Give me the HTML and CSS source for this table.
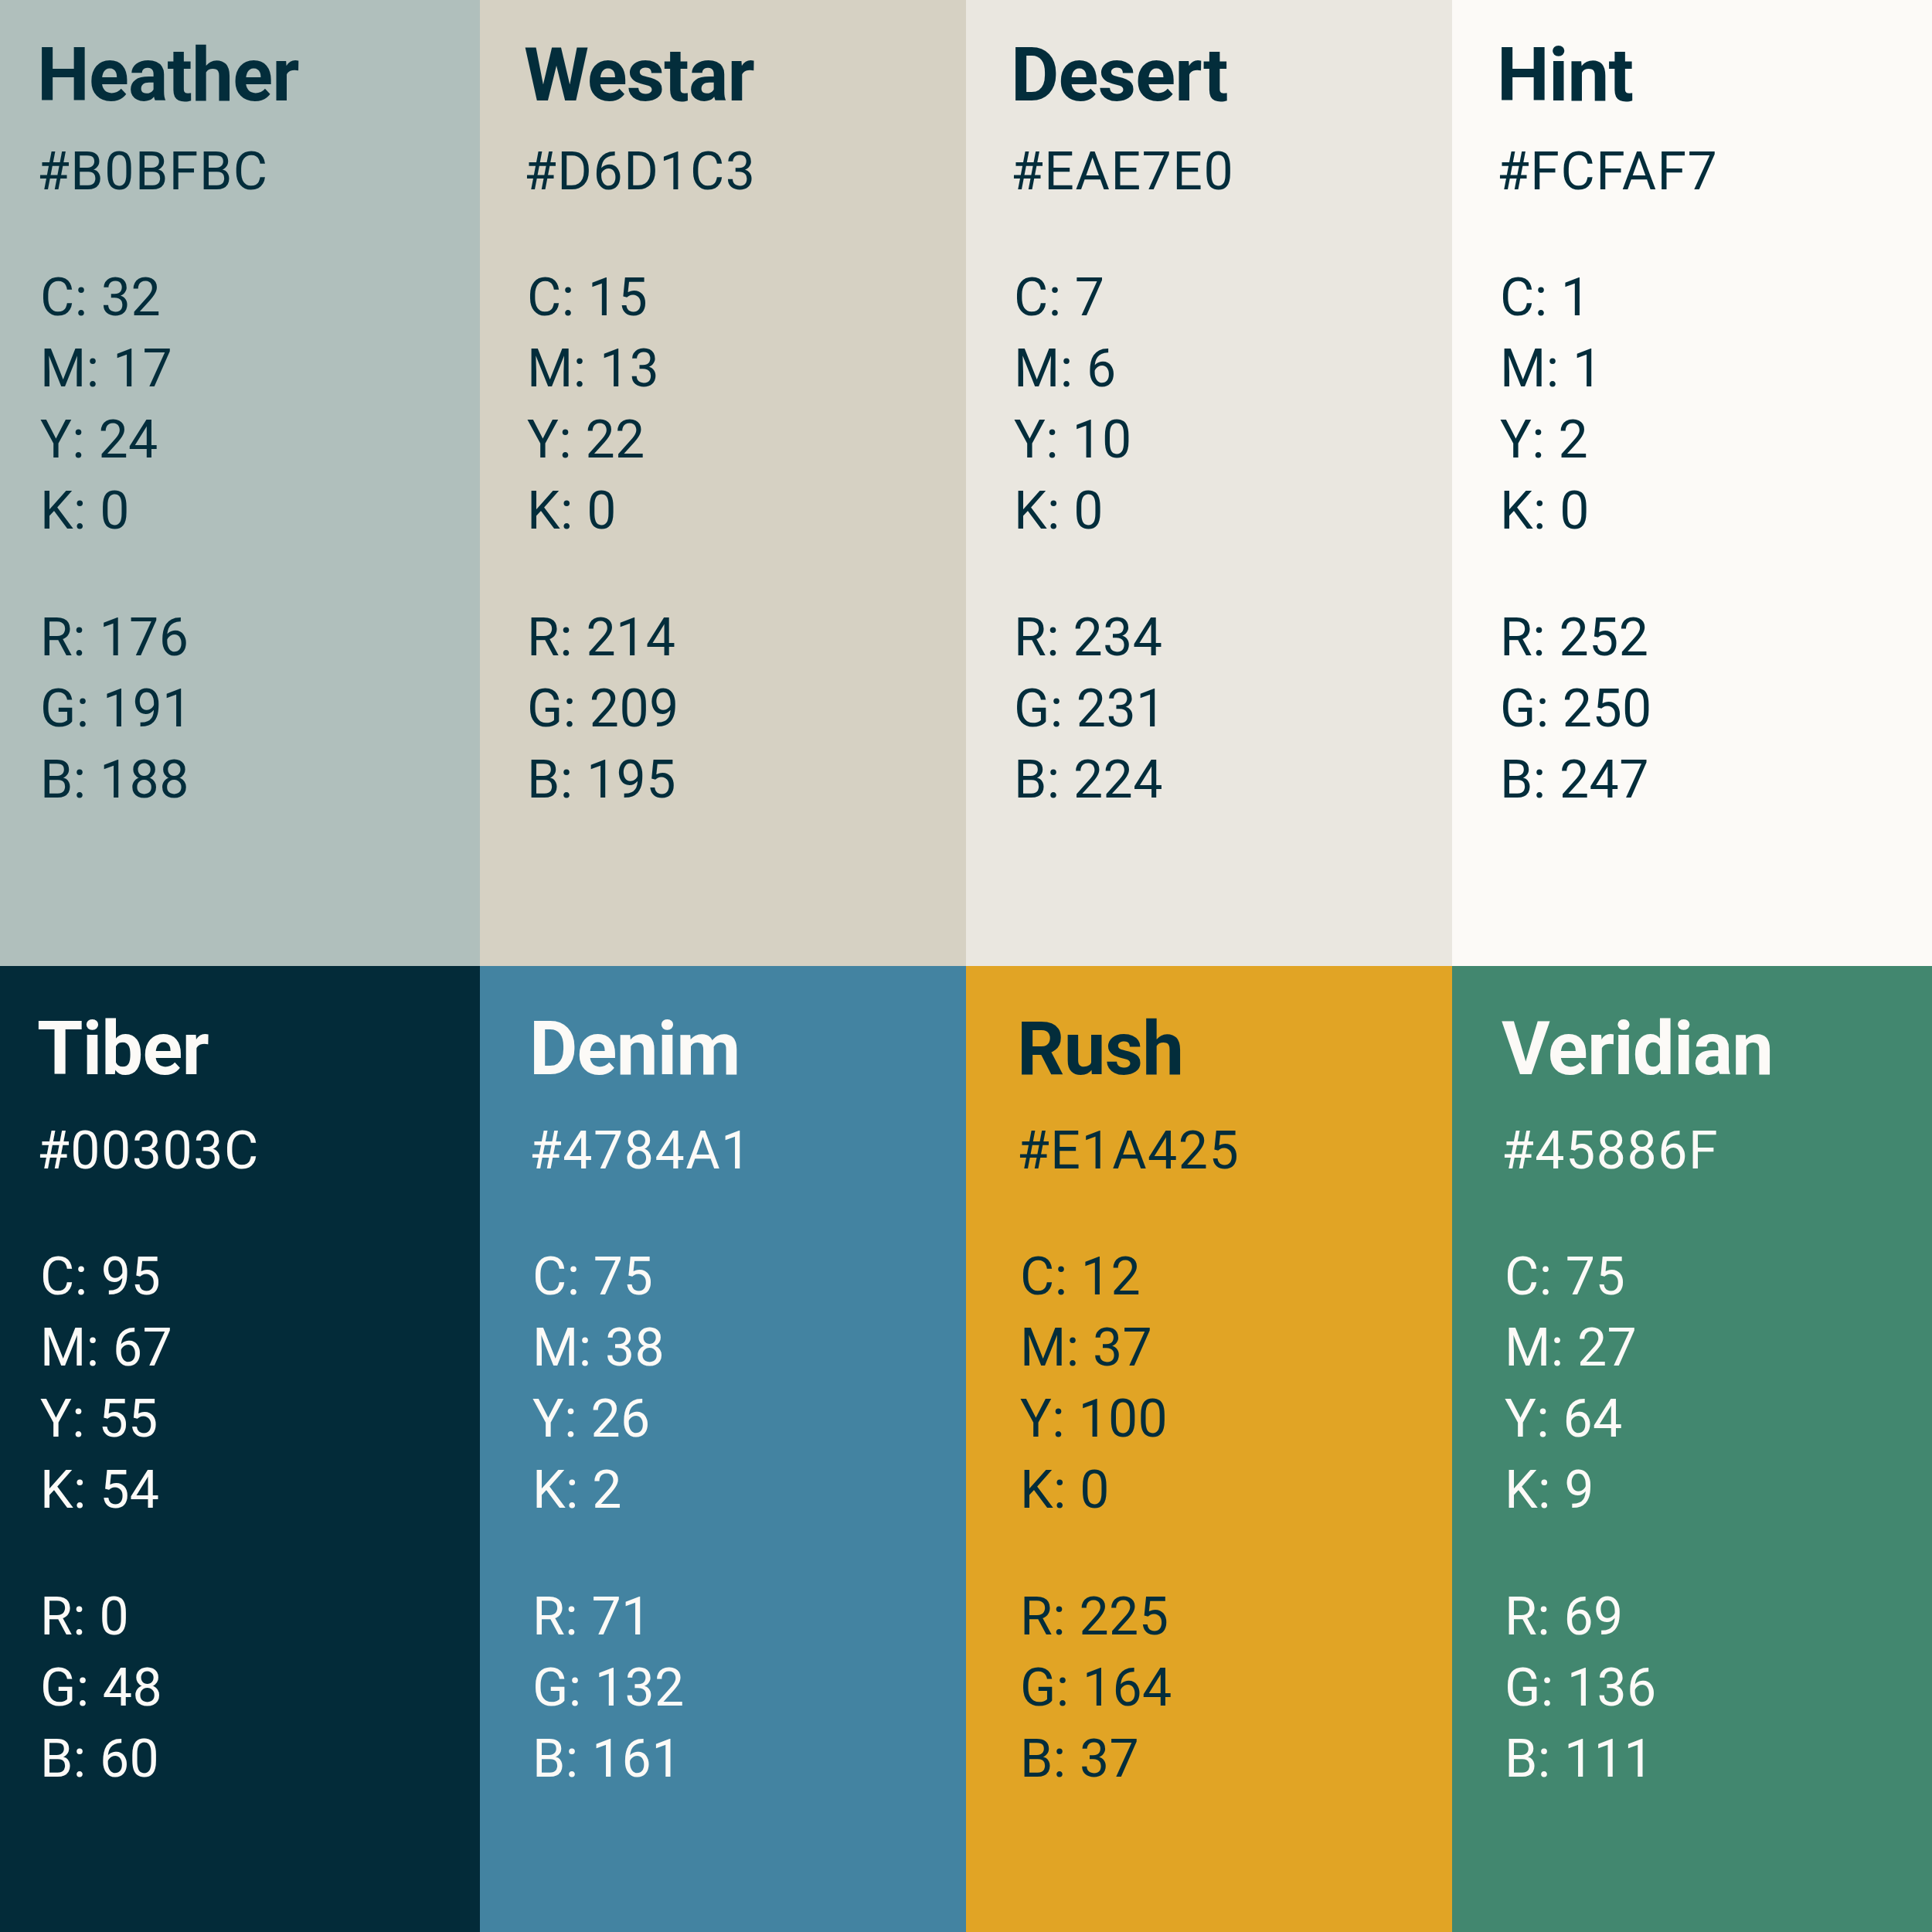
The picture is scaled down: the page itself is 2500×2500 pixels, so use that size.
FILE: index.html
```html
<!DOCTYPE html>
<html lang="en">
<head>
<meta charset="utf-8">
<title>Colour palette</title>
<link rel="stylesheet" href="styles.css">
</head>
<body>
<main class="palette">
  <section class="swatch top c1 heather">
    <h2 class="name">Heather</h2>
    <p class="hex">#B0BFBC</p>
    <ul class="values"><li>C: 32</li><li>M: 17</li><li>Y: 24</li><li>K: 0</li></ul>
    <ul class="values"><li>R: 176</li><li>G: 191</li><li>B: 188</li></ul>
  </section>
  <section class="swatch top c2 westar">
    <h2 class="name">Westar</h2>
    <p class="hex">#D6D1C3</p>
    <ul class="values"><li>C: 15</li><li>M: 13</li><li>Y: 22</li><li>K: 0</li></ul>
    <ul class="values"><li>R: 214</li><li>G: 209</li><li>B: 195</li></ul>
  </section>
  <section class="swatch top c3 desert">
    <h2 class="name">Desert</h2>
    <p class="hex">#EAE7E0</p>
    <ul class="values"><li>C: 7</li><li>M: 6</li><li>Y: 10</li><li>K: 0</li></ul>
    <ul class="values"><li>R: 234</li><li>G: 231</li><li>B: 224</li></ul>
  </section>
  <section class="swatch top c4 hint">
    <h2 class="name">Hint</h2>
    <p class="hex">#FCFAF7</p>
    <ul class="values"><li>C: 1</li><li>M: 1</li><li>Y: 2</li><li>K: 0</li></ul>
    <ul class="values"><li>R: 252</li><li>G: 250</li><li>B: 247</li></ul>
  </section>
  <section class="swatch bottom c1 tiber light">
    <h2 class="name">Tiber</h2>
    <p class="hex">#00303C</p>
    <ul class="values"><li>C: 95</li><li>M: 67</li><li>Y: 55</li><li>K: 54</li></ul>
    <ul class="values"><li>R: 0</li><li>G: 48</li><li>B: 60</li></ul>
  </section>
  <section class="swatch bottom c2 denim light">
    <h2 class="name">Denim</h2>
    <p class="hex">#4784A1</p>
    <ul class="values"><li>C: 75</li><li>M: 38</li><li>Y: 26</li><li>K: 2</li></ul>
    <ul class="values"><li>R: 71</li><li>G: 132</li><li>B: 161</li></ul>
  </section>
  <section class="swatch bottom c3 rush">
    <h2 class="name">Rush</h2>
    <p class="hex">#E1A425</p>
    <ul class="values"><li>C: 12</li><li>M: 37</li><li>Y: 100</li><li>K: 0</li></ul>
    <ul class="values"><li>R: 225</li><li>G: 164</li><li>B: 37</li></ul>
  </section>
  <section class="swatch bottom c4 veridian light">
    <h2 class="name">Veridian</h2>
    <p class="hex">#45886F</p>
    <ul class="values"><li>C: 75</li><li>M: 27</li><li>Y: 64</li><li>K: 9</li></ul>
    <ul class="values"><li>R: 69</li><li>G: 136</li><li>B: 111</li></ul>
  </section>
</main>
</body>
</html>
```

FILE: styles.css
```css
html, body {
  margin: 0;
  padding: 0;
}

body {
  font-family: Roboto, "Liberation Sans", sans-serif;
  color: #032d3b;
}

.palette {
  display: grid;
  grid-template-columns: 621px 629px 629px 621px;
  grid-template-rows: 1250px 1250px;
  width: 2500px;
  height: 2500px;
}

.swatch {
  box-sizing: border-box;
  display: flex;
  flex-direction: column;
  align-items: flex-start;
}

.swatch.top { padding-top: 49px; }
.swatch.bottom { padding-top: 59px; }

.top.c1 { padding-left: 48px; }
.top.c2 { padding-left: 57px; }
.top.c3 { padding-left: 58px; }
.top.c4 { padding-left: 58px; }

.bottom.c1 { padding-left: 48px; }
.bottom.c2 { padding-left: 64px; }
.bottom.c3 { padding-left: 66px; }
.bottom.c4 { padding-left: 64px; }

.name {
  margin: 0 0 31px;
  font-size: 96px;
  line-height: 96px;
  font-weight: 700;
  letter-spacing: -0.8px;
}

.bottom .name { margin-bottom: 38px; }

.hex {
  margin: 0;
  font-size: 68px;
  line-height: 92px;
  font-weight: 400;
  letter-spacing: 1.5px;
}

.values {
  list-style: none;
  margin: 71px 0 0;
  padding: 0 0 0 4px;
  font-size: 68px;
  line-height: 92px;
  letter-spacing: 0.4px;
}

.values + .values { margin-top: 72px; }

.heather { background: #b0bfbc; }
.westar { background: #d6d1c3; }
.desert { background: #eae7e0; }
.hint { background: #fcfaf7; }
.tiber { background: #032b39; }
.denim { background: #4383a1; }
.rush { background: #e1a425; }
.veridian { background: #42876f; }

.light { color: #fcfaf7; }
```
